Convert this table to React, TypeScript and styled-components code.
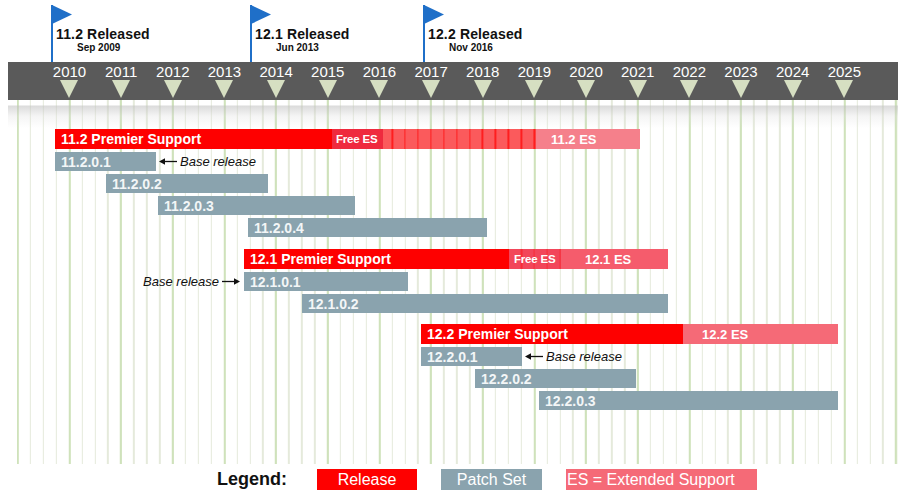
import React from "react";
import styled, { createGlobalStyle } from "styled-components";

const YEAR_W = 51.667;
const QUARTER_W = YEAR_W / 4;
const X2010 = 69.5;
const CHART_LEFT = 17;
const GRID_ORIGIN = X2010 - YEAR_W - 1;

type Tone = "premier" | "freeLabel" | "freeStripe" | "free12" | "es" | "es12" | "es122" | "patch";

const toneColor: Record<Tone, string> = {
  premier: "#fe0000",
  freeLabel: "#ef2a3e",
  freeStripe: "#fb5a5c",
  free12: "#f2465a",
  es: "#f5808b",
  es12: "#f55c6c",
  es122: "#f56a77",
  patch: "#8aa3ae",
};

const stripeAlpha: Partial<Record<Tone, number>> = {
  freeStripe: 0.75,
  free12: 0.45,
};

const years = Array.from({ length: 16 }, (_, i) => 2010 + i);

const flags = [
  { x: 52, title: "11.2 Released", date: "Sep 2009" },
  { x: 251, title: "12.1 Released", date: "Jun 2013" },
  { x: 424, title: "12.2 Released", date: "Nov 2016" },
];

interface Seg {
  to: number;
  tone: Tone;
  label?: string;
  pad?: number;
  small?: boolean;
}

interface Patch {
  from: number;
  to: number;
  label: string;
  note?: "left" | "right";
}

interface Group {
  gap: number;
  from: number;
  segs: Seg[];
  patches: Patch[];
}

const groups: Group[] = [
  {
    gap: 0,
    from: 55,
    segs: [
      { to: 332, tone: "premier", label: "11.2 Premier Support", pad: 6 },
      { to: 383, tone: "freeLabel", label: "Free ES", pad: 4, small: true },
      { to: 536, tone: "freeStripe" },
      { to: 640, tone: "es", label: "11.2 ES", pad: 15 },
    ],
    patches: [
      { from: 55, to: 156, label: "11.2.0.1", note: "right" },
      { from: 106, to: 268, label: "11.2.0.2" },
      { from: 158, to: 355, label: "11.2.0.3" },
      { from: 248, to: 487, label: "11.2.0.4" },
    ],
  },
  {
    gap: 12,
    from: 244,
    segs: [
      { to: 509, tone: "premier", label: "12.1 Premier Support", pad: 6 },
      { to: 561, tone: "free12", label: "Free ES", pad: 5, small: true },
      { to: 668, tone: "es12", label: "12.1 ES", pad: 24 },
    ],
    patches: [
      { from: 244, to: 408, label: "12.1.0.1", note: "left" },
      { from: 302, to: 668, label: "12.1.0.2" },
    ],
  },
  {
    gap: 11,
    from: 421,
    segs: [
      { to: 683, tone: "premier", label: "12.2 Premier Support", pad: 6 },
      { to: 838, tone: "es122", label: "12.2 ES", pad: 19 },
    ],
    patches: [
      { from: 421, to: 522, label: "12.2.0.1", note: "right" },
      { from: 475, to: 636, label: "12.2.0.2" },
      { from: 539, to: 838, label: "12.2.0.3" },
    ],
  },
];

const GlobalStyle = createGlobalStyle`
  html, body {
    margin: 0;
    padding: 0;
    background: #fff;
  }
  body {
    font-family: "Liberation Sans", Arial, sans-serif;
  }
`;

const Page = styled.div`
  width: 900px;
  height: 491px;
  overflow: hidden;
  background: #fff;
  display: flex;
  flex-direction: column;
`;

const FlagRow = styled.div`
  position: relative;
  flex: 0 0 62px;
`;

const FlagWrap = styled.div`
  position: absolute;
  top: 0;
  width: 140px;
  height: 62px;
`;

const FlagIcon = styled.svg`
  position: absolute;
  left: 0;
  top: 5px;
`;

const Caption = styled.div`
  padding-top: 26px;
  padding-left: 5px;
  color: #111;
  white-space: nowrap;
`;

const FlagTitle = styled.div`
  font-size: 14px;
  font-weight: bold;
  line-height: 16px;
  letter-spacing: 0.15px;
`;

const FlagDate = styled.div`
  font-size: 10px;
  font-weight: bold;
  line-height: 12px;
  padding-left: 21px;
`;

const YearBar = styled.div`
  margin-left: 8px;
  width: 890px;
  flex: 0 0 38px;
  box-sizing: border-box;
  background: #5a5a5a;
  display: flex;
  padding-left: ${X2010 - YEAR_W / 2 - 8}px;
`;

const YearCell = styled.div`
  flex: 0 0 ${YEAR_W}px;
  display: flex;
  flex-direction: column;
  align-items: center;
`;

const YearLabel = styled.span`
  margin-top: 1px;
  font-size: 15px;
  line-height: 17px;
  color: #fff;
`;

const Marker = styled.span`
  width: 0;
  height: 0;
  border-left: 9.5px solid transparent;
  border-right: 9.5px solid transparent;
  border-top: 18px solid #d6dfc2;
`;

const Chart = styled.div`
  margin-left: ${CHART_LEFT}px;
  width: 881px;
  flex: 0 0 364px;
  display: flex;
  flex-direction: column;
  background-image: repeating-linear-gradient(
      90deg,
      #cfe2bb 0 2px,
      transparent 2px ${YEAR_W}px
    ),
    repeating-linear-gradient(90deg, #e5eadb 0 1.5px, transparent 1.5px ${QUARTER_W}px);
  background-position: ${GRID_ORIGIN - CHART_LEFT}px 0, ${GRID_ORIGIN - CHART_LEFT}px 0;
`;

const Fade = styled.div`
  flex: 0 0 29px;
  margin-left: -9px;
  background: linear-gradient(
    rgba(255, 255, 255, 0) 0,
    rgba(255, 255, 255, 0) 5px,
    rgba(190, 190, 190, 0.55) 6px,
    rgba(220, 220, 220, 0.3) 16px,
    rgba(255, 255, 255, 0) 28px
  );
`;

const Row = styled.div<{ $h: number; $gap: number }>`
  display: flex;
  align-items: center;
  height: ${(p) => p.$h}px;
  margin-top: ${(p) => p.$gap}px;
  flex: 0 0 auto;
`;

const Bar = styled.div`
  display: flex;
  height: 100%;
`;

const Segment = styled.div<{ $tone: Tone; $pad: number; $small?: boolean }>`
  display: flex;
  align-items: center;
  flex: 0 0 auto;
  height: 100%;
  box-sizing: border-box;
  padding-left: ${(p) => p.$pad}px;
  background-color: ${(p) => toneColor[p.$tone]};
  background-image: ${(p) =>
    stripeAlpha[p.$tone]
      ? `repeating-linear-gradient(90deg, rgba(255,10,10,${stripeAlpha[p.$tone]}) 0 1.5px, transparent 1.5px ${QUARTER_W}px)`
      : "none"};
  color: #fff;
  font-weight: bold;
  font-size: ${(p) => (p.$small ? 11.5 : p.$tone === "premier" || p.$tone === "patch" ? 14 : 13)}px;
  letter-spacing: ${(p) => (p.$small ? "-0.2px" : "0")};
  white-space: nowrap;
  overflow: hidden;
`;

const PatchBar = styled(Segment)`
  color: #f3f6f7;
`;

const Note = styled.div<{ $side: "left" | "right" }>`
  display: flex;
  align-items: center;
  justify-content: ${(p) => (p.$side === "left" ? "flex-end" : "flex-start")};
  gap: 3px;
  box-sizing: border-box;
  padding: ${(p) => (p.$side === "left" ? "0 4px 0 0" : "0 0 0 3px")};
  font-size: 13px;
  font-style: italic;
  color: #111;
  white-space: nowrap;
`;

const Legend = styled.div`
  flex: 0 0 27px;
  box-sizing: border-box;
  padding: 4px 0 0 217px;
  display: flex;
  align-items: center;
  gap: 24px;
`;

const LegendLabel = styled.span`
  width: 76px;
  font-size: 18px;
  font-weight: bold;
  color: #111;
`;

const LegendKey = styled.span<{ $bg: string; $w: number; $left?: boolean }>`
  width: ${(p) => p.$w}px;
  height: 21px;
  display: flex;
  align-items: center;
  justify-content: ${(p) => (p.$left ? "flex-start" : "center")};
  padding-left: ${(p) => (p.$left ? 1 : 0)}px;
  box-sizing: border-box;
  background: ${(p) => p.$bg};
  color: #fff;
  font-size: 16px;
  white-space: nowrap;
`;

const stripeOffset = (x: number) => {
  const d = (GRID_ORIGIN - x) % QUARTER_W;
  return ((d % QUARTER_W) + QUARTER_W) % QUARTER_W;
};

const Arrow: React.FC<{ dir: "left" | "right" }> = ({ dir }) => (
  <svg width="18" height="9" viewBox="0 0 18 9" style={{ transform: dir === "right" ? "scaleX(-1)" : undefined }}>
    <line x1="4" y1="4.5" x2="18" y2="4.5" stroke="#111" strokeWidth="1.3" />
    <polygon points="0,4.5 6,1.3 6,7.7" fill="#111" />
  </svg>
);

const FlagMark: React.FC<{ x: number; title: string; date: string }> = ({ x, title, date }) => (
  <FlagWrap style={{ left: x - 1 }}>
    <FlagIcon width="24" height="57" viewBox="0 0 24 57">
      <rect x="0" y="0" width="2" height="57" fill="#1f6fc8" />
      <polygon points="1,0 21,9.5 1,19" fill="#1f6fc8" />
    </FlagIcon>
    <Caption>
      <FlagTitle>{title}</FlagTitle>
      <FlagDate>{date}</FlagDate>
    </Caption>
  </FlagWrap>
);

const PremierRow: React.FC<{ group: Group }> = ({ group }) => {
  let start = group.from;
  return (
    <Row $h={20} $gap={group.gap}>
      <Bar style={{ marginLeft: group.from - CHART_LEFT }}>
        {group.segs.map((s, i) => {
          const from = start;
          start = s.to;
          return (
            <Segment
              key={i}
              $tone={s.tone}
              $pad={s.pad ?? 0}
              $small={s.small}
              style={{ width: s.to - from, backgroundPositionX: `${stripeOffset(from)}px` }}
            >
              {s.label}
            </Segment>
          );
        })}
      </Bar>
    </Row>
  );
};

const PatchRow: React.FC<{ patch: Patch }> = ({ patch }) => {
  const bar = (
    <PatchBar $tone="patch" $pad={6} style={{ width: patch.to - patch.from }}>
      {patch.label}
    </PatchBar>
  );
  if (patch.note === "left") {
    return (
      <Row $h={19} $gap={3}>
        <Note $side="left" style={{ width: patch.from - CHART_LEFT }}>
          Base release
          <Arrow dir="right" />
        </Note>
        {bar}
      </Row>
    );
  }
  return (
    <Row $h={19} $gap={3}>
      <Bar style={{ marginLeft: patch.from - CHART_LEFT }}>{bar}</Bar>
      {patch.note === "right" && (
        <Note $side="right">
          <Arrow dir="left" />
          Base release
        </Note>
      )}
    </Row>
  );
};

export default function App() {
  return (
    <>
      <GlobalStyle />
      <Page>
        <FlagRow>
          {flags.map((f) => (
            <FlagMark key={f.title} {...f} />
          ))}
        </FlagRow>
        <YearBar>
          {years.map((y) => (
            <YearCell key={y}>
              <YearLabel>{y}</YearLabel>
              <Marker />
            </YearCell>
          ))}
        </YearBar>
        <Chart>
          <Fade />
          {groups.map((g, gi) => (
            <React.Fragment key={gi}>
              <PremierRow group={g} />
              {g.patches.map((p) => (
                <PatchRow key={p.label} patch={p} />
              ))}
            </React.Fragment>
          ))}
        </Chart>
        <Legend>
          <LegendLabel>Legend:</LegendLabel>
          <LegendKey $bg="#fe0000" $w={100}>
            Release
          </LegendKey>
          <LegendKey $bg="#8aa3ae" $w={101}>
            Patch Set
          </LegendKey>
          <LegendKey $bg="#f56a77" $w={191} $left>
            ES = Extended Support
          </LegendKey>
        </Legend>
      </Page>
    </>
  );
}
